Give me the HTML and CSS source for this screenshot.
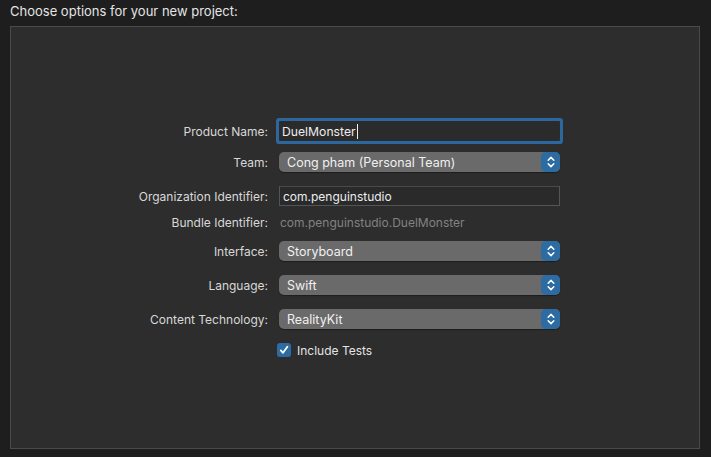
FILE: index.html
```html
<!DOCTYPE html>
<html>
<head>
<meta charset="utf-8">
<link rel="stylesheet" href="styles.css">
</head>
<body>
<div class="title">Choose options for your new project:</div>
<div class="panel">
  <div class="form">
    <div class="row">
      <div class="label">Product Name:</div>
      <div class="control"><div class="field focused"><span>DuelMonster</span><span class="caret"></span></div></div>
    </div>
    <div class="row gap-m">
      <div class="label">Team:</div>
      <div class="control"><div class="popup"><span class="popup-text">Cong pham (Personal Team)</span><span class="stepper"><svg width="10" height="14" viewBox="0 0 10 14"><path d="M2.2 5.2 L5 2.4 L7.8 5.2 M2.2 8.8 L5 11.6 L7.8 8.8" fill="none" stroke="#fff" stroke-width="1.5" stroke-linecap="round" stroke-linejoin="round"/></svg></span></div></div>
    </div>
    <div class="row gap-l">
      <div class="label">Organization Identifier:</div>
      <div class="control"><div class="field plain">com.penguinstudio</div></div>
    </div>
    <div class="row gap-s">
      <div class="label">Bundle Identifier:</div>
      <div class="control"><div class="static">com.penguinstudio.DuelMonster</div></div>
    </div>
    <div class="row gap-ms">
      <div class="label">Interface:</div>
      <div class="control"><div class="popup"><span class="popup-text">Storyboard</span><span class="stepper"><svg width="10" height="14" viewBox="0 0 10 14"><path d="M2.2 5.2 L5 2.4 L7.8 5.2 M2.2 8.8 L5 11.6 L7.8 8.8" fill="none" stroke="#fff" stroke-width="1.5" stroke-linecap="round" stroke-linejoin="round"/></svg></span></div></div>
    </div>
    <div class="row gap-l">
      <div class="label">Language:</div>
      <div class="control"><div class="popup"><span class="popup-text">Swift</span><span class="stepper"><svg width="10" height="14" viewBox="0 0 10 14"><path d="M2.2 5.2 L5 2.4 L7.8 5.2 M2.2 8.8 L5 11.6 L7.8 8.8" fill="none" stroke="#fff" stroke-width="1.5" stroke-linecap="round" stroke-linejoin="round"/></svg></span></div></div>
    </div>
    <div class="row gap-l">
      <div class="label">Content Technology:</div>
      <div class="control"><div class="popup"><span class="popup-text">RealityKit</span><span class="stepper"><svg width="10" height="14" viewBox="0 0 10 14"><path d="M2.2 5.2 L5 2.4 L7.8 5.2 M2.2 8.8 L5 11.6 L7.8 8.8" fill="none" stroke="#fff" stroke-width="1.5" stroke-linecap="round" stroke-linejoin="round"/></svg></span></div></div>
    </div>
    <div class="row gap-m">
      <div class="label"></div>
      <div class="control"><label class="check"><span class="box"><svg width="10" height="10" viewBox="0 0 10 10"><path d="M1.8 5.4 L4 7.8 L8.4 1.8" fill="none" stroke="#fff" stroke-width="1.8" stroke-linecap="round" stroke-linejoin="round"/></svg></span><span>Include Tests</span></label></div>
    </div>
  </div>
</div>
</body>
</html>
```
FILE: styles.css
```css
html, body {
  margin: 0;
  padding: 0;
}
body {
  width: 711px;
  height: 457px;
  background: #1e1e1e;
  font-family: Inter, "Noto Sans", "Liberation Sans", sans-serif;
  color: #dcdcdc;
  overflow: hidden;
}
.title {
  font-size: 13px;
  line-height: 16px;
  padding: 3px 0 0 10px;
  height: 23px;
  color: #e4e4e4;
}
.panel {
  margin-left: 10px;
  width: 688px;
  border: 1px solid #4a4a4a;
  background: #2d2d2d;
  padding-top: 94px;
  box-sizing: content-box;
  height: 327px;
}
.form {
  display: flex;
  flex-direction: column;
}
.row {
  display: grid;
  grid-template-columns: 257px 281px;
  column-gap: 11px;
  height: 20px;
  align-items: center;
  font-size: 12px;
}
.gap-s { margin-top: 6px; }
.gap-ms { margin-top: 9px; }
.gap-m { margin-top: 11px; }
.gap-l { margin-top: 14px; }
.label {
  text-align: right;
  color: #d8d8d8;
  white-space: nowrap;
}
.control {
  height: 20px;
  display: flex;
  align-items: center;
}
.field {
  box-sizing: border-box;
  width: 281px;
  height: 20px;
  display: flex;
  align-items: center;
  padding-left: 3px;
  color: #ededed;
  font-size: 12.2px;
}
.field.focused {
  background: #2b2b2b;
  box-shadow: 0 0 0 3px #2c67a0;
  border-radius: 1px;
}
.caret {
  display: inline-block;
  width: 1px;
  height: 15px;
  background: #f0f0f0;
  margin-left: 1px;
}
.field.plain {
  background: #2a2a2a;
  border: 1px solid #555;
  border-top-color: #4a4a4a;
  font-size: 12px;
}
.static {
  padding-left: 1px;
  color: #828282;
  font-size: 12px;
}
.popup {
  box-sizing: border-box;
  width: 281px;
  height: 20px;
  border-radius: 5px;
  background: #6a6a6a;
  display: flex;
  align-items: center;
  justify-content: space-between;
  box-shadow: 0 1px 1px rgba(0,0,0,0.35);
}
.popup-text {
  padding-left: 8px;
  color: #f0f0f0;
  font-size: 12.5px;
}
.stepper {
  width: 19px;
  height: 20px;
  border-radius: 5px;
  background: #2d6ba3;
  display: flex;
  align-items: center;
  justify-content: center;
}
.check {
  display: flex;
  align-items: center;
  margin-left: -2px;
  color: #e4e4e4;
  font-size: 12px;
}
.box {
  width: 14px;
  height: 14px;
  border-radius: 3px;
  background: #2d6ba3;
  display: flex;
  align-items: center;
  justify-content: center;
  margin-right: 6px;
}
```
